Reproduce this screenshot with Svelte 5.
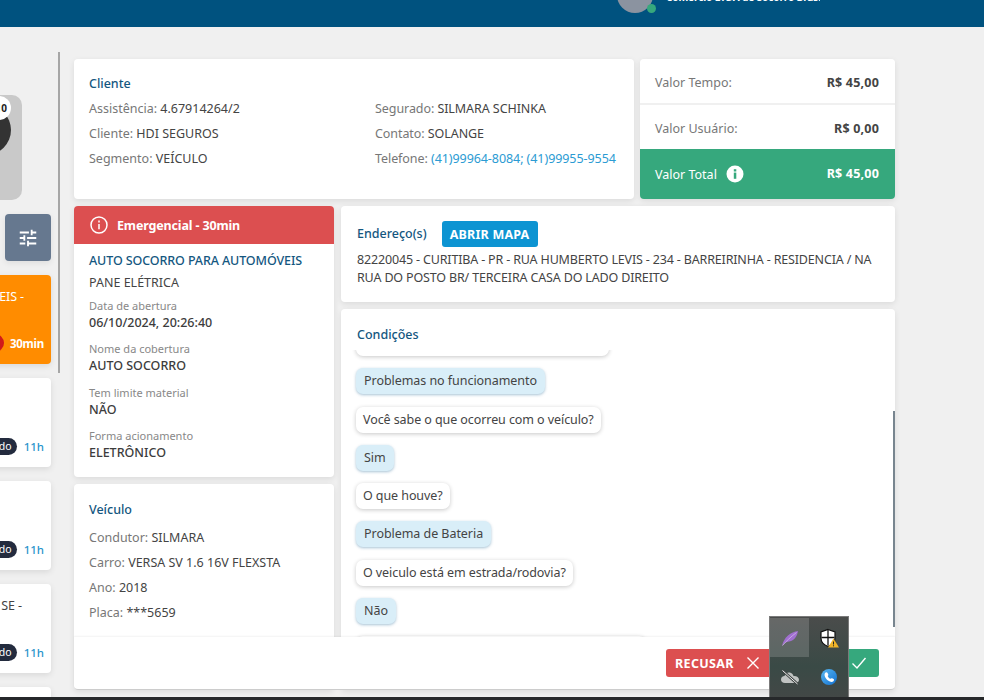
<script>
  const clienteLeft = [
    ['Assistência:', '4.67914264/2'],
    ['Cliente:', 'HDI SEGUROS'],
    ['Segmento:', 'VEÍCULO']
  ];
  const details = [
    ['Data de abertura', '06/10/2024, 20:26:40'],
    ['Nome da cobertura', 'AUTO SOCORRO'],
    ['Tem limite material', 'NÃO'],
    ['Forma acionamento', 'ELETRÔNICO']
  ];
  const veiculo = [
    ['Condutor:', 'SILMARA'],
    ['Carro:', 'VERSA SV 1.6 16V FLEXSTA'],
    ['Ano:', '2018'],
    ['Placa:', '***5659']
  ];
  const chat = [
    ['a', 'Problemas no funcionamento'],
    ['q', 'Você sabe o que ocorreu com o veículo?'],
    ['a', 'Sim'],
    ['q', 'O que houve?'],
    ['a', 'Problema de Bateria'],
    ['q', 'O veiculo está em estrada/rodovia?'],
    ['a', 'Não']
  ];
  const sideCards = ['', '', 'SE -'];
</script>

<div class="page">
  <header class="top">
    <div class="user">
      <div class="avatar"><span class="dot"></span></div>
      <div class="uname">Comércio LTDA de Socorro Brasil</div>
    </div>
  </header>

  <div class="body">
    <aside class="side">
      <div class="gauge">
        <div class="ball"></div>
        <div class="badge">10</div>
      </div>
      <button class="filter" aria-label="Filtros">
        <svg viewBox="0 0 24 24" width="22" height="22" fill="#fff"><path d="M3 17v2h6v-2H3zM3 5v2h10V5H3zm10 16v-2h8v-2h-8v-2h-2v6h2zM7 9v2H3v2h4v2h2V9H7zm14 4v-2H11v2h10zm-6-4h2V7h4V5h-4V3h-2v6z"/></svg>
      </button>
      <div class="job active">
        <div class="jobtext">AUTOMÓVEIS -</div>
        <div class="jobfoot"><span class="reddot"></span><b>30min</b></div>
      </div>
      {#each sideCards as t}
        <div class="job">
          <div class="jobtext">{t}</div>
          <div class="jobfoot"><span class="pill">Agendado</span><b class="hours">11h</b></div>
        </div>
      {/each}
      <div class="job"></div>
    </aside>
    <div class="rule"></div>

    <main class="main">
      <div class="row one">
        <section class="card cliente">
          <h3>Cliente</h3>
          <div class="two">
            <div>
              {#each clienteLeft as [k, v]}
                <p class="kv"><span>{k}</span> {v}</p>
              {/each}
            </div>
            <div class="tight">
              <p class="kv"><span>Segurado:</span> SILMARA SCHINKA</p>
              <p class="kv"><span>Contato:</span> SOLANGE</p>
              <p class="kv"><span>Telefone:</span> <a href="#tel">(41)99964-8084; (41)99955-9554</a></p>
            </div>
          </div>
        </section>
        <section class="values">
          <div class="val"><span>Valor Tempo:</span><b>R$ 45,00</b></div>
          <div class="val"><span>Valor Usuário:</span><b>R$ 0,00</b></div>
          <div class="val total">
            <span class="tl">Valor Total
              <svg viewBox="0 0 18 18" width="18" height="18"><circle cx="9" cy="9" r="8.5" fill="#fff"/><rect x="7.8" y="7.6" width="2.5" height="6.2" fill="#36a87d"/><rect x="7.8" y="4.2" width="2.5" height="2.3" fill="#36a87d"/></svg>
            </span>
            <b>R$ 45,00</b>
          </div>
        </section>
      </div>

      <div class="row two-cols">
        <div class="col left">
          <section class="card service">
            <div class="alert">
              <svg viewBox="0 0 18 18" width="18" height="18" fill="none" stroke="#fff" stroke-width="1.5"><circle cx="9" cy="9" r="8"/><path d="M9 8v5.2M9 4.6v1.8"/></svg>
              <span>Emergencial - 30min</span>
            </div>
            <div class="svc">
              <h4>AUTO SOCORRO PARA AUTOMÓVEIS</h4>
              <div class="sub">PANE ELÉTRICA</div>
              {#each details as [k, v]}
                <div class="det"><small>{k}</small><strong>{v}</strong></div>
              {/each}
            </div>
          </section>
          <section class="card veiculo">
            <h3>Veículo</h3>
            {#each veiculo as [k, v]}
              <p class="kv"><span>{k}</span> {v}</p>
            {/each}
          </section>
        </div>

        <div class="col right">
          <section class="card address">
            <div class="addr-head">
              <h3>Endereço(s)</h3>
              <button class="map">ABRIR MAPA</button>
            </div>
            <p class="addr">82220045 - CURITIBA - PR - RUA HUMBERTO LEVIS - 234 - BARREIRINHA - RESIDENCIA / NA RUA DO POSTO BR/ TERCEIRA CASA DO LADO DIREITO</p>
          </section>
          <section class="card cond">
            <h3>Condições</h3>
            <div class="chat">
              <div class="msg q cut"></div>
              {#each chat as [w, t]}
                <div class="msg {w}">{t}</div>
              {/each}
              <div class="msg q tail"></div>
            </div>
            <div class="thumb"></div>
          </section>
        </div>
      </div>

      <div class="footer">
        <button class="refuse">RECUSAR
          <svg viewBox="0 0 14 14" width="14" height="14" fill="none" stroke="#fff" stroke-width="1.4"><path d="M1.5 1.5l11 11M12.5 1.5l-11 11"/></svg>
        </button>
        <button class="accept" aria-label="Aceitar">
          <svg viewBox="0 0 16 14" width="16" height="14" fill="none" stroke="#fff" stroke-width="1.4"><path d="M1.5 7.5l4.5 4.5 8.5-10"/></svg>
        </button>
      </div>
    </main>

    <div class="tray">
      <div class="cell on">
        <svg viewBox="0 0 20 20" width="20" height="20"><path d="M2 18C3 14 4.500 10.500 8 7.500 11 5 14.500 3.500 18 3c-.5 3.500-2 7-5 9-2.500 1.600-5.500 1.500-8 2.700-1.200.6-2.200 2-3 3.300z" fill="#a06fd0"/><path d="M2.500 17.500C6.500 13 10.500 9 16.500 4.500" stroke="#d2b5ea" stroke-width=".8" fill="none"/></svg>
      </div>
      <div class="cell">
        <svg viewBox="0 0 20 20" width="20" height="20"><path d="M9 1.500l7 2.500v6c0 4-3 7-7 8.500-4-1.500-7-4.500-7-8.500V4z" fill="#fff" stroke="#111" stroke-width="1.200"/><path d="M9 2v15.500M2.500 9.500h13" stroke="#111" stroke-width="1.300"/><path d="M14.500 10.500L20 19.500H9z" fill="#f0b429"/><path d="M14.500 13.500v3M14.500 17.300v1" stroke="#222" stroke-width="1"/></svg>
      </div>
      <div class="cell">
        <svg viewBox="0 0 20 20" width="20" height="20"><path d="M5 16c-2.500 0-4-1.500-4-3.500S2.500 9 4.500 9c.7-2.500 3-4 5.200-3.500 2 .3 3.300 1.700 3.800 3.500 3-.3 5.500 1.300 5.500 3.800 0 2-1.500 3.200-3.500 3.200z" fill="#c0c3c2"/><path d="M2.500 3.500l15 13.500" stroke="#3f4544" stroke-width="2.600"/><path d="M2.500 3.500l15 13.500" stroke="#ededed" stroke-width="1"/></svg>
      </div>
      <div class="cell">
        <svg viewBox="0 0 20 20" width="20" height="20"><defs><linearGradient id="sk" x1="0" y1="0" x2="1" y2="1"><stop offset="0" stop-color="#59b8f2"/><stop offset="1" stop-color="#1270d0"/></linearGradient></defs><circle cx="10" cy="10" r="8" fill="url(#sk)"/><path d="M6 6c1.100-1.100 2.200-.9 2.800.4l.5 1.100c.2.600 0 1-.6 1.400.5 1.300 1.500 2.400 2.800 2.900.5-.6.900-.8 1.500-.6l1.200.6c1.100.6 1.100 1.500.2 2.400-1.100 1.100-3.200.9-5.400-.7C6.300 11.600 4.700 8.200 6 6z" fill="#fff"/></svg>
      </div>
    </div>
  </div>
  <div class="strip"></div>
</div>

<style>
  :global(body) { margin: 0; background: #f0f0f0; }
  .page {
    width: 984px; height: 700px; overflow: hidden;
    display: flex; flex-direction: column;
    font-family: "Noto Sans", "Liberation Sans", sans-serif;
    font-size: 12.5px; color: #444;
    background: #f0f0f0;
  }
  .top {
    height: 27px; flex: none; background: #00527f; overflow: hidden;
    display: flex; justify-content: flex-end;
    padding-right: 164px;
  }
  .user { display: flex; gap: 13px; align-items: flex-start; height: 13px; }
  .avatar { width: 36px; height: 36px; border-radius: 50%; background: #8b93a0; margin-top: -23px; position: relative; }
  .dot { position: absolute; right: -3px; bottom: 0; width: 9px; height: 9px; border-radius: 50%; background: #36a87d; }
  .uname { color: #fff; font-weight: 700; font-size: 10px; letter-spacing: -.1px; line-height: 14px; margin-top: -10px; white-space: nowrap; width: 154px; overflow: hidden; }

  .body { flex: 1; min-height: 0; display: flex; position: relative; overflow: hidden; }
  .strip { height: 3px; flex: none; background: #26282a; }

  .side { width: 58px; flex: none; overflow: hidden; padding-top: 68px; display: flex; flex-direction: column; gap: 14px; align-items: flex-end; box-sizing: border-box; }
  .gauge { width: 100px; margin-right: 36px; height: 105px; flex: none; background: #c9c9c9; border-radius: 10px; position: relative; overflow: hidden; }
  .ball { position: absolute; right: 11px; top: 10px; width: 50px; height: 50px; border-radius: 50%; background: #333; }
  .badge { position: absolute; right: 11px; top: 1px; width: 24px; height: 24px; border-radius: 50%; background: #fff; font-size: 10px; font-weight: 700; color: #222; line-height: 24px; text-align: right; box-sizing: border-box; padding-right: 4px; overflow: hidden; }
  .filter { width: 46px; height: 47px; margin-right: 7px; flex: none; background: #66788f; border: 0; border-radius: 4px; padding: 0; display: flex; align-items: center; justify-content: center; box-shadow: 0 2px 6px rgba(0,0,0,.08); }
  .job { width: 200px; height: 89px; margin-right: 7px; flex: none; background: #fff; border-radius: 4px; box-shadow: 0 2px 6px rgba(0,0,0,.1); box-sizing: border-box; padding: 14px 7px 0 0; text-align: right; }
  .job.active { background: #ff8c00; color: #fff; }
  .jobtext { height: 16px; line-height: 16px; padding-right: 22px; font-size: 12.5px; white-space: nowrap; letter-spacing: -.1px; }
  .job.active .jobtext { padding-right: 20px; }
  .jobfoot { display: flex; justify-content: flex-end; align-items: center; gap: 7px; margin-top: 29px; font-size: 11.5px; height: 18px; }
  .job.active .jobfoot { gap: 6px; letter-spacing: -.25px; }
  .reddot { width: 18px; height: 18px; border-radius: 50%; background: #d11a1a; }
  .pill { background: #232b3e; color: #fff; border-radius: 9px; height: 17px; line-height: 17px; padding: 0 5px 0 8px; font-size: 10.5px; }
  .hours { color: #2a94cc; font-weight: 500; }

  .rule { width: 2px; height: 321px; margin-top: 25px; flex: none; background: #a6a6a6; }

  .main { width: 821px; margin-left: 14px; padding-top: 32px; display: flex; flex-direction: column; gap: 7px; height: 670px; box-sizing: border-box; flex: none; }
  .row { display: flex; }
  .one { gap: 6px; height: 140px; flex: none; }
  .two-cols { gap: 7px; flex: 1; min-height: 0; padding-bottom: 7px; }
  .col { display: flex; flex-direction: column; gap: 7px; min-height: 0; }
  .left { width: 260px; flex: none; }
  .right { width: 554px; flex: none; }

  .card { background: #fff; border-radius: 4px; box-shadow: 0 2px 6px rgba(0,0,0,.09); box-sizing: border-box; }
  h3 { margin: 0; font-size: 12.5px; font-weight: 500; color: #14577f; line-height: 18px; }
  .kv { margin: 0; line-height: 25px; height: 25px; color: #444; white-space: nowrap; font-size: 12.5px; }
  .kv span { color: #777; }
  .tight .kv { letter-spacing: -.07px; }
  a { color: #2b9bd3; text-decoration: none; }

  .cliente { width: 560px; padding: 16px 15px; }
  .cliente h3 { margin-bottom: 3px; }
  .two { display: grid; grid-template-columns: 286px 1fr; }

  .values { width: 255px; border-radius: 4px; overflow: hidden; display: flex; flex-direction: column; gap: 2px; box-shadow: 0 2px 6px rgba(0,0,0,.09); }
  .val { background: #fff; height: 44px; display: flex; justify-content: space-between; align-items: center; padding: 2px 16px 0 15px; box-sizing: border-box; color: #777; font-size: 12.5px; }
  .val b { color: #444; font-weight: 700; letter-spacing: .2px; }
  .val.total { background: #36a87d; color: #fff; height: 50px; margin-top: -2px; padding-top: 0; }
  .val.total b { color: #fff; margin-top: -1px; }
  .tl { display: inline-flex; gap: 9px; align-items: center; }

  .service { height: 271px; flex: none; overflow: hidden; }
  .alert { height: 38px; background: #dc4f50; color: #fff; font-weight: 700; font-size: 12.5px; letter-spacing: -.15px; display: flex; align-items: center; gap: 9px; padding-left: 16px; }
  .svc { padding: 8px 15px 0; }
  h4 { margin: 0; font-size: 12.5px; font-weight: 500; color: #14577f; line-height: 18px; white-space: nowrap; letter-spacing: -.1px; }
  .sub { line-height: 18px; margin-top: 4px; margin-bottom: 5.6px; }
  .det { display: flex; flex-direction: column; height: 43.500px; }
  .det small { font-size: 11px; color: #888; line-height: 16px; }
  .det strong { font-size: 12.5px; font-weight: 500; color: #3c3c3c; line-height: 17px; }

  .veiculo { flex: 1; min-height: 0; padding: 17px 15px 0; overflow: hidden; }
  .veiculo h3 { margin-bottom: 6px; }

  .address { height: 96px; flex: none; padding: 15px 16px 0; }
  .addr-head { display: flex; align-items: center; gap: 15px; height: 26px; }
  .map { background: #0d94d2; color: #fff; border: 0; border-radius: 3px; height: 26px; width: 96px; padding: 0; font: 700 12.5px "Noto Sans", sans-serif; letter-spacing: .2px; }
  .addr { margin: 4px 0 0; line-height: 18px; font-size: 12.5px; color: #444; letter-spacing: -.16px; }

  .cond { flex: 1; min-height: 0; position: relative; padding: 17px 15px 0 16px; overflow: hidden; }
  .chat { height: 290px; margin-top: 6px; overflow: hidden; display: flex; flex-direction: column; align-items: flex-start; gap: 12.300px; padding: 0 4px; margin-left: -5px; }
  .msg { height: 26px; line-height: 25px; box-sizing: border-box; padding: 0 7px; border-radius: 7px; white-space: nowrap; flex: none; font-size: 12.5px; color: #444; background: #fff; box-shadow: 0 1px 4px rgba(0,0,0,.22); letter-spacing: -.08px; }
  .msg.a { background: #d9eef8; padding: 0 8px; box-shadow: 0 1px 3px rgba(60,120,160,.45); letter-spacing: -.05px; }
  .msg.cut { margin-top: -20px; width: 253px; }
  .msg.tail { width: 290px; }
  .thumb { position: absolute; right: 0; top: 102px; width: 2px; height: 216px; background: #78858f; }

  .footer { position: absolute; left: 74px; bottom: 7px; width: 821px; height: 53px; background: #fff; border-bottom: 1px solid #ccc; box-sizing: border-box; box-shadow: 0 -1px 2px rgba(0,0,0,.05); display: flex; justify-content: flex-end; align-items: center; gap: 7px; padding: 0 16px 0 0; border-radius: 0 0 4px 4px; }
  .refuse { background: #dc4f50; color: #fff; border: 0; border-radius: 3px; height: 28px; width: 136px; padding: 0 0 0 9px; font: 700 12.5px "Noto Sans", sans-serif; letter-spacing: .35px; display: flex; align-items: center; gap: 12px; }
  .accept { background: #36a87d; border: 0; border-radius: 3px; height: 28px; width: 70px; display: flex; align-items: center; justify-content: flex-end; padding: 0 12px 0 0; }

  .tray { position: absolute; left: 769px; top: 589px; width: 80px; height: 84px; background: linear-gradient(180deg, #4a4c4b, #3a4a46 60%, #434746); border: 1px solid #7a7a7a; border-bottom: 0; box-sizing: border-box; display: grid; grid-template-columns: 39px 39px; grid-template-rows: 39px 39px; padding: 1px 0 0 0; align-content: start; }
  .cell { display: flex; align-items: center; justify-content: center; }
  .cell.on { background: rgba(255,255,255,.16); }
</style>
